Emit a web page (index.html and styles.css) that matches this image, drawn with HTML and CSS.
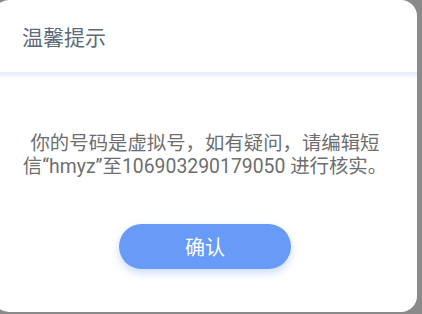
FILE: index.html
```html
<!DOCTYPE html>
<html lang="zh-CN">
<head>
    <meta charset="UTF-8">
    <meta name="viewport" content="width=device-width, initial-scale=1.0">
    <title>温馨提示</title>
    <link rel="stylesheet" href="styles.css">
</head>
<body>
    <div class="dialog">
        <div class="dialog-header">
            <h2>温馨提示</h2>
        </div>
        <div class="divider"></div>

        <div class="dialog-body">
            <p>你的号码是虚拟号，如有疑问，请编辑短<br>信“hmyz”至106903290179050 进行核实。</p>
        </div>

        <div class="dialog-footer">
            <button class="confirm-btn">确认</button>
        </div>
    </div>
</body>
</html>
```

FILE: styles.css
```css
:root {
    --primary-color: #689bf8;
    --title-color: #5b6b7b;
    --text-color: #6e6e6e;
    --mask-color: #8a8a8a;
}

* {
    box-sizing: border-box;
    margin: 0;
    padding: 0;
}

body {
    font-family: Roboto, 'Noto Sans CJK SC', sans-serif;
    background-color: var(--mask-color);
    width: 422px;
    height: 314px;
    overflow: hidden;
}

.dialog {
    width: 424px;
    height: 312px;
    margin-left: -7px;
    background: white;
    border-radius: 16px;
    display: flex;
    flex-direction: column;
}

.dialog-header {
    height: 72px;
    display: flex;
    align-items: center;
    padding-left: 29px;
}

.dialog-header h2 {
    font-size: 21px;
    font-weight: 400;
    color: var(--title-color);
}

.divider {
    height: 7px;
    background: linear-gradient(#e3ecfc, rgba(255,255,255,0));
}

.dialog-body {
    padding: 53px 10px 0;
}

.dialog-body p {
    font-size: 19.4px;
    line-height: 23px;
    color: var(--text-color);
    text-align: center;
    white-space: nowrap;
}

.dialog-footer {
    display: flex;
    justify-content: center;
    padding-top: 46px;
}

.confirm-btn {
    width: 172px;
    height: 45px;
    border: none;
    border-radius: 23px;
    background-color: var(--primary-color);
    color: white;
    font-family: inherit;
    font-size: 20px;
    box-shadow: 0 4px 8px rgba(104,155,248,0.35);
}
```
